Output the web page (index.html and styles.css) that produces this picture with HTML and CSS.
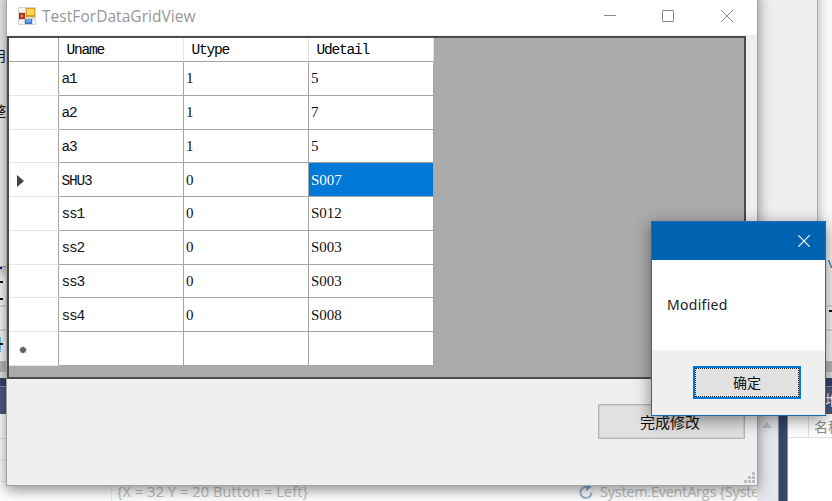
FILE: index.html
```
<!DOCTYPE html>
<html lang="zh-CN">
<head>
<meta charset="utf-8">
<title>TestForDataGridView</title>
<link rel="stylesheet" href="styles.css">
</head>
<body>
<div class="desktop">
  <div class="ide">
    <div class="editor"></div>
    <div class="splitter"></div>
    <div class="panel-head"></div>
    <div class="watch">
      <div class="watch-left">
        <div class="watch-row">
          <span class="watch-value">{X = 32 Y = 20 Button = Left}</span>
          <svg class="refresh" width="16" height="16" viewBox="0 0 16 16"><path d="M8.500 3A5.500 5.500 0 1 0 13.500 8.500" fill="none" stroke="#9cb9d9" stroke-width="2.200"/><path d="M8 0l5.500 3L8 7z" fill="#86a9cf"/></svg>
          <span class="watch-type">System.EventArgs {System.EventArgs}</span>
        </div>
      </div>
      <div class="scrollbar"><i class="up"></i></div>
      <div class="divider"></div>
      <div class="stack"><div class="stack-head"><span>名称</span></div></div>
    </div>
  </div>
  <span class="frag char-v">v</span>
  <span class="frag char-c">堆</span>
  <i class="tick t1"></i><i class="tick t2"></i><i class="tick t3"></i><i class="tick t4"></i><i class="tick t5"></i><i class="hl"></i>
  <div class="back-window"></div>
  <span class="frag char-a">用</span>
  <span class="frag char-b">整</span>

  <main class="window">
    <header class="titlebar">
      <svg class="app-icon" width="18" height="18" viewBox="0 0 18 18"><rect width="18" height="18" rx="1" fill="#d5d5d5"/><path d="M1 1h6v4H1zM1 13h5v4H1zM15 12h2v5h-2z" fill="#f4f4f4"/><rect x="1" y="6" width="6" height="6" fill="#b8321f"/><rect x="3" y="8" width="2" height="2" fill="#ee8a70"/><rect x="8" y="1" width="9" height="9" fill="#d8a020"/><rect x="9" y="2" width="7" height="6" fill="#fbd65a"/><rect x="7" y="12" width="7" height="5" fill="#3f78d5"/><rect x="8" y="12" width="5" height="3" fill="#73a5ef"/></svg>
      <h1>TestForDataGridView</h1>
      <svg class="controls" width="132" height="14" viewBox="0 0 132 14" fill="none" stroke="#8c8c8c"><path d="M0 6.500h12M58.500 1.500h11v11h-11zM117 1l12 12M129 1l-12 12"/></svg>
    </header>
    <section class="grid-view">
      <div class="row head"><div></div><div>Uname</div><div>Utype</div><div>Udetail</div></div>
      <div class="row"><div></div><div>a1</div><div>1</div><div>5</div></div>
      <div class="row"><div></div><div>a2</div><div>1</div><div>7</div></div>
      <div class="row"><div></div><div>a3</div><div>1</div><div>5</div></div>
      <div class="row"><div><i class="current"></i></div><div>SHU3</div><div>0</div><div class="selected">S007</div></div>
      <div class="row"><div></div><div>ss1</div><div>0</div><div>S012</div></div>
      <div class="row"><div></div><div>ss2</div><div>0</div><div>S003</div></div>
      <div class="row"><div></div><div>ss3</div><div>0</div><div>S003</div></div>
      <div class="row"><div></div><div>ss4</div><div>0</div><div>S008</div></div>
      <div class="row"><div><svg class="new-row" width="8" height="8" viewBox="0 0 8 8"><circle cx="4" cy="4" r="2.800" fill="#444"/><path d="M4 0.500v7M0.500 4h7M1.500 1.500l5 5M6.500 1.500l-5 5" stroke="#666"/></svg></div><div></div><div></div><div></div></div>
    </section>
    <footer class="actions"><button class="finish">完成修改</button></footer>
    <svg class="grip" width="11" height="11" viewBox="0 0 11 11" fill="#bdbdbd"><path d="M8 0h3v3H8zM4 4h3v3H4zM8 4h3v3H8zM0 8h3v3H0zM4 8h3v3H4zM8 8h3v3H8z"/></svg>
  </main>

  <div class="dialog">
    <div class="dialog-bar"><svg width="12" height="12" viewBox="0 0 12 12" stroke="#fff" stroke-width="1.200"><path d="M0.300 0.300l11.400 11.400M11.700 0.300L0.300 11.700"/></svg></div>
    <p>Modified</p>
    <div class="dialog-foot"><button class="ok"><span>确定</span></button></div>
  </div>
</div>
</body>
</html>
```
FILE: styles.css
```
* { box-sizing: border-box; }
body { margin: 0; }
.desktop { position: relative; width: 832px; height: 501px; overflow: hidden; background: #fff; font-family: "Noto Sans", "Noto Sans CJK SC", sans-serif; }

.ide { display: flex; flex-direction: column; height: 501px; }
.editor { height: 361px; background: linear-gradient(#dcdce2, #dcdce2) 0 305px / 100% 2px no-repeat, linear-gradient(#dcdce2, #dcdce2) 0 329px / 100% 2px no-repeat, #f9f9f9; }
.splitter { height: 17px; background: linear-gradient(#b9bac1 11px, #e3e4e8 11px); }
.panel-head { height: 36px; background: linear-gradient(#344563 8px, #8290ae 8px, #8290ae 9px, #4a5b80 9px); }
.watch { display: flex; flex: 1; min-height: 0; }
.watch-left { width: 757px; background: linear-gradient(#e2e2e8, #e2e2e8) 0 24px / 100% 1px no-repeat, linear-gradient(#eee, #eee) 0 46px / 100% 1px no-repeat, linear-gradient(#eee, #eee) 0 67px / 100% 1px no-repeat, #fff; overflow: hidden; }
.watch-row { display: flex; align-items: center; height: 18px; margin-top: 69px; margin-left: 111px; padding-left: 5px; border-left: 1px solid #eee; color: #bdbdbd; font-size: 14px; line-height: 20px; white-space: nowrap; }
.watch-value { flex: none; width: 461px; }
.watch-value, .watch-type { font-family: "Open Sans", sans-serif; font-size: 14.5px; letter-spacing: 0.12px; }
.watch-type { flex: none; letter-spacing: -0.25px; }
.refresh { flex: none; margin-right: 6px; }
.scrollbar { width: 21px; padding: 8px 0 0 5px; background: #e6e6ec; }
.up { display: block; width: 0; border: 5.5px solid transparent; border-top: 0; border-bottom: 6px solid #bfc0c9; }
.divider { width: 10px; background: #344767; border-left: 1px solid #8290ae; border-right: 1px solid #8290ae; }
.stack { flex: 1; overflow: hidden; }
.stack-head { height: 24px; padding-left: 20px; border-bottom: 1px solid #dedee5; }
.stack-head span { display: block; height: 24px; padding-left: 5px; border-left: 1px solid #dedee5; color: #8c8c8c; font-size: 14px; line-height: 25px; white-space: nowrap; }

.back-window { position: absolute; left: -20px; top: -20px; width: 838px; height: 287px; border: 1px solid #aaa; background: #efefef; box-shadow: 0 3px 11px rgba(0,0,0,.3); }
.frag { position: absolute; font-size: 14px; line-height: 18px; color: #111; }
.char-a { left: -8px; top: 47px; }
.char-b { left: -8px; top: 102px; }
.char-v { left: 828px; top: 254px; color: #2b82a5; }
.char-c { left: 825px; top: 391px; color: #fff; }
.tick { position: absolute; left: 0; width: 3px; height: 2px; background: #111; }
.t1 { top: 267px; background: #1414c8; width: 2px; }
.t2 { top: 281px; }
.t3 { top: 298px; }
.t4 { top: 343px; z-index: 1; }
.t5 { top: 310px; left: 829px; }
.hl { position: absolute; left: 0; top: 337px; width: 1px; height: 15px; background: #72c7fa; }

.window { position: absolute; left: 6px; top: -10px; width: 752px; height: 496px; border: 1px solid #a3a3a3; background: #efefef; box-shadow: 0 4px 13px rgba(0,0,0,.45); }
.titlebar { display: flex; align-items: center; height: 44px; padding: 5px 21px 0 11px; background: #fff; }
.titlebar h1 { flex: 1; margin: 0 0 0 6px; color: #969696; font: 400 15.5px/24px "Open Sans", sans-serif; letter-spacing: 0.05px; }
.grid-view { width: 739px; height: 343px; border: 2px solid #4b4b4b; background: #ababab; margin-top: 1px; }
.row { display: grid; grid-template-columns: 50px 125px 125px 125px; width: 425px; height: 33.75px; background: #fff; }
.row > div { display: flex; align-items: center; padding: 0 0 0 2px; border-right: 1px solid #a5a5a5; border-bottom: 1px solid #a5a5a5; color: #111; font: 15px/18px "Liberation Serif", serif; }
.row > div:first-child { border-bottom-color: #e5e5e5; }
.row > div:nth-child(2) { padding: 2px 0 0 2.500px; font-family: "Liberation Mono", monospace; font-size: 14.5px; letter-spacing: -1.2px; }
.row.head { height: 24px; }
.row.head > div { padding: 1px 0 0 7.500px; border-right-color: #e5e5e5; border-bottom-color: #a5a5a5; color: #000; font-family: "Liberation Mono", monospace; font-size: 14.5px; letter-spacing: -1.2px; }
.row.head > div:first-child { border-right-color: #a5a5a5; }
.row > div.selected { background: #0078d7; color: #fff; }
.current { margin: 3px 0 0 6px; border: 6px solid transparent; border-left: 7px solid #444; border-right: 0; }
.new-row { margin: 4px 0 0 8px; }
.actions { display: flex; justify-content: flex-end; padding: 25px 12px 0 0; }
.finish { width: 147px; height: 35px; padding: 0 3px 0 0; border: 1px solid #b5b5b5; background: #e1e1e1; color: #111; font: 15px/20px "Noto Sans CJK SC", sans-serif; box-shadow: inset 0 0 0 1px #cecece; }
.grip { position: absolute; right: 2px; bottom: 2px; }

.dialog { position: absolute; left: 651px; top: 221px; width: 175px; height: 195px; display: flex; flex-direction: column; border: 1px solid #1a6fb3; background: #fff; box-shadow: 0 4px 16px rgba(0,0,0,.45); }
.dialog-bar { display: flex; align-items: center; justify-content: flex-end; height: 38px; padding-right: 15px; background: #0063b1; }
.dialog p { flex: 1; margin: 0; padding: 34px 0 0 15px; color: #222; font: 14px/22px "Noto Sans", sans-serif; letter-spacing: 0.3px; }
.dialog-foot { display: flex; justify-content: flex-end; height: 65px; padding: 16px 24px 0 0; background: #efefef; }
.ok { width: 108px; height: 33px; padding: 0; border: 2px solid #0078d7; background: #e1e1e1; color: #111; font: 14px/20px "Noto Sans CJK SC", sans-serif; }
.ok span { display: flex; align-items: center; justify-content: center; height: 29px; padding-bottom: 2px; border: 1px dotted #222; }
```
